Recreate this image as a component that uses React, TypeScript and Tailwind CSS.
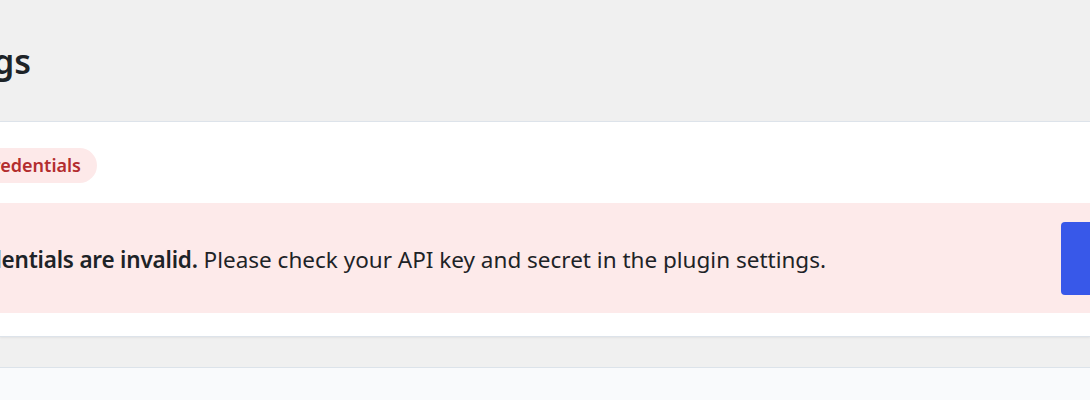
export default function App() {
  const font = { fontFamily: '"Noto Sans", "Open Sans", sans-serif' };
  return (
    <div className="w-[1090px] h-[400px] overflow-hidden bg-[#f0f0f0] text-[#1d2327]" style={font}>
      <div className="h-[121px] flex items-center">
        <div className="w-[31px] flex justify-end">
          <h1 className="shrink-0 whitespace-nowrap text-[34px] font-semibold leading-none">Settings</h1>
        </div>
      </div>
      <div className="bg-white border-t border-b border-[#dde3ea] shadow-[0_1px_2px_rgba(0,0,0,0.06)] pt-[26px] pb-[23px]">
        <div className="w-[97px] flex justify-end">
          <span className="shrink-0 whitespace-nowrap h-[35px] px-4 flex items-center rounded-full bg-[#fde9e9] text-[#b32d2e] text-[18px] font-semibold">
            Invalid credentials
          </span>
        </div>
        <div className="mt-[20px] h-[110px] bg-[#fdeaea] flex items-center">
          <div className="w-[826px] shrink-0 flex justify-end pt-[5px]">
            <p className="shrink-0 whitespace-nowrap text-[22.5px] leading-none">
              <span className="font-semibold tracking-[-0.2px]">Your API credentials are invalid.</span> Please check your API key and secret in the plugin settings.
            </p>
          </div>
          <button className="shrink-0 ml-[235px] w-[160px] h-[73px] rounded-[4px] bg-[#3858e9] text-white text-[16px]"></button>
        </div>
      </div>
      <div className="h-[30px]"></div>
      <div className="border-t border-[#dce3ea] bg-[#f9fafc] h-[40px]"></div>
    </div>
  );
}
